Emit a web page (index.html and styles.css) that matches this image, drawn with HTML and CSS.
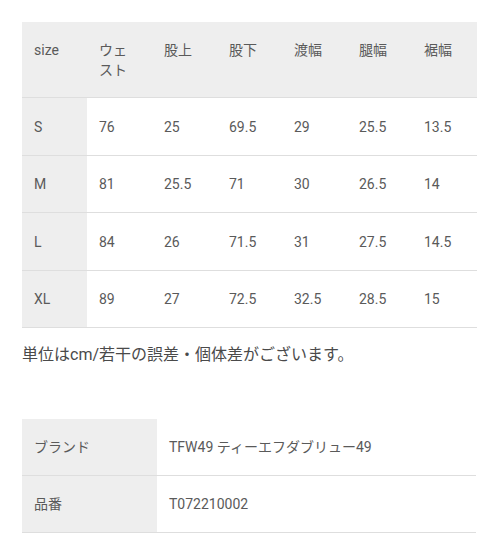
FILE: index.html
```html
<!DOCTYPE html>
<html lang="ja">
<head>
<meta charset="utf-8">
<link rel="stylesheet" href="styles.css">
</head>
<body>
<main class="page">
  <div class="size-table">
    <div class="cell head">size</div>
    <div class="cell head">ウェスト</div>
    <div class="cell head">股上</div>
    <div class="cell head">股下</div>
    <div class="cell head">渡幅</div>
    <div class="cell head">腿幅</div>
    <div class="cell head">裾幅</div>

    <div class="cell label">S</div>
    <div class="cell">76</div><div class="cell">25</div><div class="cell">69.5</div><div class="cell">29</div><div class="cell">25.5</div><div class="cell">13.5</div>

    <div class="cell label">M</div>
    <div class="cell">81</div><div class="cell">25.5</div><div class="cell">71</div><div class="cell">30</div><div class="cell">26.5</div><div class="cell">14</div>

    <div class="cell label">L</div>
    <div class="cell">84</div><div class="cell">26</div><div class="cell">71.5</div><div class="cell">31</div><div class="cell">27.5</div><div class="cell">14.5</div>

    <div class="cell label">XL</div>
    <div class="cell">89</div><div class="cell">27</div><div class="cell">72.5</div><div class="cell">32.5</div><div class="cell">28.5</div><div class="cell">15</div>
  </div>

  <p class="note">単位はcm/若干の誤差・個体差がございます。</p>

  <div class="spec-table">
    <div class="cell label">ブランド</div>
    <div class="cell">TFW49 ティーエフダブリュー49</div>
    <div class="cell label">品番</div>
    <div class="cell">T072210002</div>
  </div>
</main>
</body>
</html>
```

FILE: styles.css
```css
html, body {
  margin: 0;
  padding: 0;
  background: #ffffff;
}

body {
  font-family: Roboto, "Noto Sans CJK JP", sans-serif;
  color: #5a5a5a;
  font-size: 14px;
  line-height: 20px;
}

.page {
  padding: 22px 19px 0 22px;
}

.size-table {
  display: grid;
  grid-template-columns: repeat(7, 65px);
  grid-template-rows: 76px 58px 57px 58px 57px;
}

.cell {
  display: flex;
  align-items: center;
  padding: 0 12px;
  border-bottom: 1px solid #dedede;
  box-sizing: border-box;
}

.head {
  background: #eeeeee;
  align-items: flex-start;
  padding-top: 18px;
}

.label {
  background: #eeeeee;
}

.note {
  margin: 15px 0 0;
  font-size: 16px;
  line-height: 24px;
  color: #4a4a4a;
}

.spec-table {
  margin-top: 52px;
  display: grid;
  grid-template-columns: 135px 1fr;
  grid-auto-rows: 57px;
  width: 454px;
}
```
